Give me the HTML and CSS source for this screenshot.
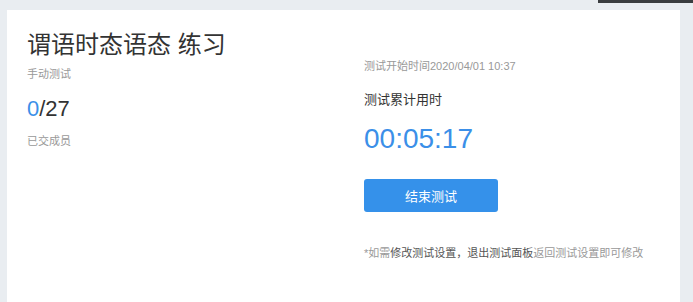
FILE: index.html
```html
<html>
<head>
<title>谓语时态语态 练习</title>
<link rel="stylesheet" href="styles.css">
</head>
<body>
<div class="topShade"></div>
<div id="panel">
   <div class="leftCol">
      <h2 class="title">谓语时态语态 练习</h2>
      <p class="sub">手动测试</p>
      <p class="count"><span class="done">0</span>/27</p>
      <p class="sub">已交成员</p>
   </div>
   <div class="rightCol">
      <p class="sub">测试开始时间2020/04/01 10:37</p>
      <p class="label">测试累计用时</p>
      <p class="timer">00:05:17</p>
      <button class="endB" type="button">结束测试</button>
      <p class="note">*如需<b>修改测试设置，退出测试面板</b>返回测试设置即可修改</p>
   </div>
</div>
</body>
</html>
```

FILE: styles.css
```css
/* page */
   html, body  {margin: 0px; height: 100%}
   body        {background-color: #e9edf1; overflow: hidden;
                font-family: "Liberation Sans", "Noto Sans CJK SC", sans-serif; color: #333}
   p, h2       {margin: 0px}

   .topShade   {position: absolute; top: 0px; left: 598px; width: 95px; height: 3px;
                background-color: #3a3d40}

   #panel      {background-color: white; margin: 10px 0px 0px 7px; width: 673px;
                height: 100%; box-sizing: border-box; padding: 20px 0px 0px 20px;
                display: flex}

/* left column */
   .leftCol    {width: 337px}
   .title      {font-size: 24px; line-height: 30px; font-weight: normal; color: #333}
   .sub        {font-size: 11px; line-height: 16px; color: #999}
   .leftCol .sub   {margin-top: 6px}
   .count      {font-size: 22px; line-height: 30px; margin: 12px 0px 9px; color: #333}
   .done       {color: #3b8fe8}

/* right column */
   .rightCol   {padding-top: 28px}
   .label      {font-size: 13px; line-height: 20px; margin-top: 16px; color: #333}
   .timer      {font-size: 28px; line-height: 40px; margin-top: 9px; color: #3b8fe8}
   .endB       {display: block; width: 134px; height: 33px; margin-top: 20px;
                background-color: #3591ea; color: white; border: 0px; border-radius: 3px;
                font-family: "Noto Sans CJK SC", sans-serif; font-size: 13px}
   .note       {font-size: 11px; line-height: 16px; margin-top: 33px; color: #999}
   .note b     {font-weight: normal; color: #555}
```
